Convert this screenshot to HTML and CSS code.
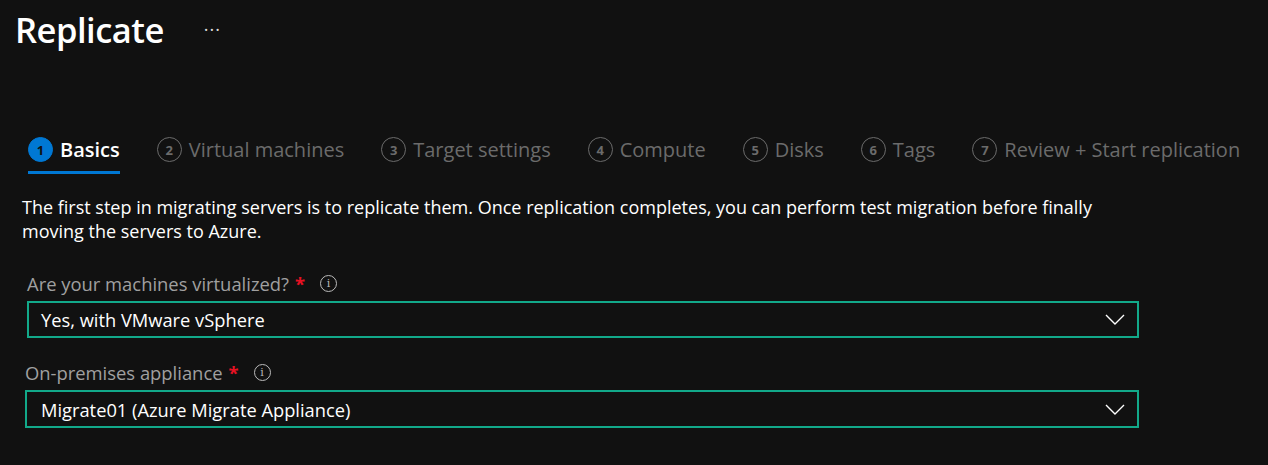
FILE: index.html
```html
<!DOCTYPE html>
<html lang="en">
<head>
    <meta charset="UTF-8">
    <meta name="viewport" content="width=device-width, initial-scale=1.0">
    <title>Replicate</title>
    <link rel="stylesheet" href="styles.css">
</head>
<body>
    <div class="page-header">
        <h1>Replicate</h1>
        <span class="more">&middot;&middot;&middot;</span>
    </div>

    <nav class="steps">
        <div class="step active"><span class="num">1</span><span class="name">Basics</span></div>
        <div class="step"><span class="num">2</span><span class="name">Virtual machines</span></div>
        <div class="step"><span class="num">3</span><span class="name">Target settings</span></div>
        <div class="step"><span class="num">4</span><span class="name">Compute</span></div>
        <div class="step"><span class="num">5</span><span class="name">Disks</span></div>
        <div class="step"><span class="num">6</span><span class="name">Tags</span></div>
        <div class="step"><span class="num">7</span><span class="name">Review + Start replication</span></div>
    </nav>

    <p class="intro">The first step in migrating servers is to replicate them. Once replication completes, you can perform test migration before finally moving the servers to Azure.</p>

    <div class="field">
        <label>Are your machines virtualized? <span class="req">*</span>
            <span class="info">i</span>
        </label>
        <div class="select">
            <span>Yes, with VMware vSphere</span>
            <svg width="20" height="11" viewBox="0 0 20 11"><path d="M1 1 L10 10 L19 1" fill="none" stroke="#fff" stroke-width="1.4"/></svg>
        </div>
    </div>

    <div class="field second">
        <label>On-premises appliance <span class="req">*</span>
            <span class="info">i</span>
        </label>
        <div class="select">
            <span>Migrate01 (Azure Migrate Appliance)</span>
            <svg width="20" height="11" viewBox="0 0 20 11"><path d="M1 1 L10 10 L19 1" fill="none" stroke="#fff" stroke-width="1.4"/></svg>
        </div>
    </div>
</body>
</html>
```

FILE: styles.css
```css
body {
    font-family: 'Open Sans', 'Noto Sans', sans-serif;
    background-color: #111111;
    margin: 0;
    padding: 0;
    color: #fff;
}
.page-header {
    display: flex;
    align-items: center;
    height: 58px;
    padding-left: 15px;
}
.page-header h1 {
    margin: 0;
    font-size: 34.5px;
    font-weight: 600;
    letter-spacing: -0.5px;
}
.more {
    margin-left: 40px;
    font-size: 18px;
    color: #ddd;
    letter-spacing: 1px;
}
.steps {
    display: flex;
    margin-top: 73px;
    padding-left: 28px;
    gap: 37px;
}
.step {
    display: flex;
    align-items: center;
    gap: 7px;
    height: 43px;
    padding-bottom: 3px;
    box-sizing: border-box;
    border-bottom: 3px solid transparent;
    color: #6b6b6b;
    font-size: 20px;
}
.step .num {
    flex: none;
    width: 25px;
    height: 25px;
    border: 1.5px solid #6b6b6b;
    border-radius: 50%;
    box-sizing: border-box;
    display: flex;
    align-items: center;
    justify-content: center;
    font-size: 13px;
    font-weight: 700;
    color: #6b6b6b;
}
.step.active {
    border-bottom-color: #0078d4;
    color: #fff;
    font-weight: 600;
}
.step.active .num {
    background-color: #0078d4;
    border-color: #0078d4;
    color: #111;
}
.intro {
    margin: 21px 0 0 22px;
    max-width: 1110px;
    font-size: 18px;
    line-height: 24px;
    color: #fff;
}
.field {
    margin: 28px 0 0 27px;
    width: 1112px;
}
.field.second {
    margin-top: 22px;
    margin-left: 25px;
    width: 1114px;
}
.field label {
    display: flex;
    align-items: center;
    font-size: 18.4px;
    color: #a0a0a0;
    height: 24px;
}
.req {
    color: #e81123;
    margin-left: 6px;
    font-weight: 700;
}
.info {
    width: 17px;
    height: 17px;
    border: 1px solid #bbb;
    border-radius: 50%;
    box-sizing: border-box;
    margin-left: 15px;
    font-size: 11px;
    color: #bbb;
    display: flex;
    align-items: center;
    justify-content: center;
    font-family: 'DejaVu Serif', serif;
}
.select {
    margin-top: 6px;
    height: 37px;
    border: 2px solid #12a98a;
    box-sizing: border-box;
    display: flex;
    align-items: center;
    justify-content: space-between;
    padding: 0 12px 0 12px;
    font-size: 18.3px;
    color: #fff;
}
.field.second .select {
    height: 38px;
    padding-left: 14px;
}
```
